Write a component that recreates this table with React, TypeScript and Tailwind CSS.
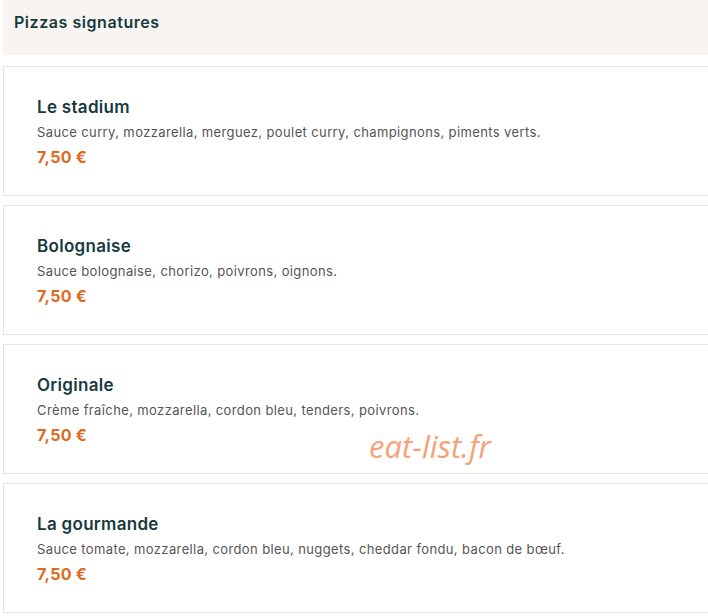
const items = [
  {
    name: "Le stadium",
    desc: "Sauce curry, mozzarella, merguez, poulet curry, champignons, piments verts.",
  },
  { name: "Bolognaise", desc: "Sauce bolognaise, chorizo, poivrons, oignons." },
  { name: "Originale", desc: "Crème fraîche, mozzarella, cordon bleu, tenders, poivrons." },
  {
    name: "La gourmande",
    desc: "Sauce tomate, mozzarella, cordon bleu, nuggets, cheddar fondu, bacon de bœuf.",
  },
];

export default function App() {
  return (
    <div className="relative w-[708px] h-[616px] overflow-hidden bg-white pl-[3px] font-['Inter',sans-serif]">
      <div className="h-[55px] bg-[#f8f4f1] pl-[11px] pt-[11px]">
        <h2 className="text-[16px] font-semibold tracking-[0.55px] text-[#173a3f] leading-[22px]">
          Pizzas signatures
        </h2>
      </div>

      <div className="mt-[11px] flex flex-col gap-[9px] w-[720px]">
        {items.map((item) => (
          <div
            key={item.name}
            className="h-[130px] border border-[#e6e6e6] bg-white pl-[33px] pt-[28px]"
          >
            <h3 className="text-[17px] font-semibold tracking-[0.3px] text-[#173a3f] leading-[24px]">
              {item.name}
            </h3>
            <p className="mt-[3px] text-[13px] tracking-[0.38px] text-[#555] leading-[20px]">{item.desc}</p>
            <p className="mt-[4px] text-[16px] font-bold tracking-[0.3px] text-[#dd6b1f] leading-[22px]">
              7,50 €
            </p>
          </div>
        ))}
      </div>

      {/* watermark */}
      <div className="absolute left-[369px] top-[431px] text-[31px] italic text-[#f5a27a] font-['Open_Sans',sans-serif] leading-none">
        eat-list.fr
      </div>
    </div>
  );
}
